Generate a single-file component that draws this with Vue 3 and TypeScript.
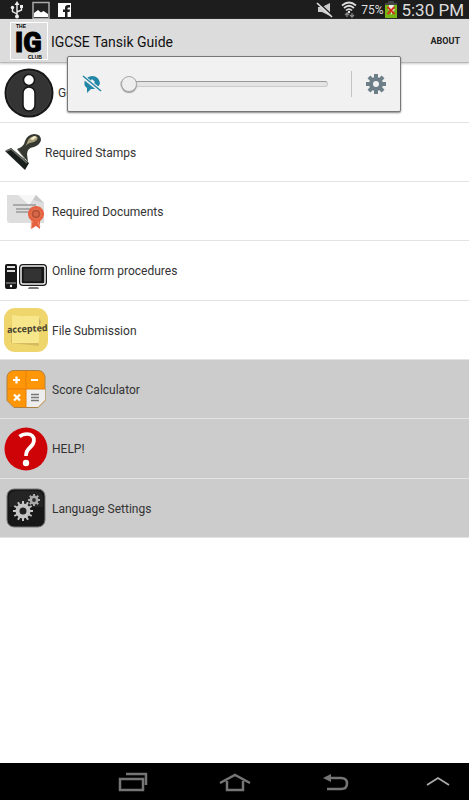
<script setup lang="ts">
import { ref } from 'vue'

type IconName = 'info' | 'stamp' | 'document' | 'computer' | 'accepted' | 'calculator' | 'help' | 'settings'

interface MenuItem {
  icon: IconName
  label: string
  shaded?: boolean
}

const items: MenuItem[] = [
  { icon: 'info', label: 'General' },
  { icon: 'stamp', label: 'Required Stamps' },
  { icon: 'document', label: 'Required Documents' },
  { icon: 'computer', label: 'Online form procedures' },
  { icon: 'accepted', label: 'File Submission' },
  { icon: 'calculator', label: 'Score Calculator', shaded: true },
  { icon: 'help', label: 'HELP!', shaded: true },
  { icon: 'settings', label: 'Language Settings', shaded: true },
]

const volume = ref(0)
const teeth = [0, 45, 90, 135, 180, 225, 270, 315]
const fineTeeth = [0, 30, 60, 90, 120, 150, 180, 210, 240, 270, 300, 330]
</script>

<template>
  <div class="screen">
    <div class="status">
      <div class="status-group notices">
        <svg width="14" height="18" viewBox="0 0 14 18" fill="none" stroke="#eee" stroke-width="1.4">
          <path d="M7 3v13M7 13L2.500 10.500V7M7 11l4.500-2V6" />
          <path d="M7 0l2.500 4h-5z" fill="#eee" stroke="none" />
          <circle cx="7" cy="15.500" r="2" fill="#eee" stroke="none" />
          <circle cx="2.500" cy="6.500" r="1.700" fill="#eee" stroke="none" />
          <path d="M10 4h3v3h-3z" fill="#eee" stroke="none" />
        </svg>
        <svg width="18" height="18" viewBox="0 0 18 18">
          <path d="M1 1.500h16v16H1z" fill="#222" stroke="#aaa" stroke-width="1.500" />
          <path d="M2 16v-4l4-3 3 2.500 2.500-1.500L16 13v3z" fill="#fff" />
        </svg>
        <svg width="13" height="14" viewBox="0 0 13 14">
          <path d="M0 0h13v14H0z" fill="#fff" />
          <path d="M7 14V9H5V6.500h2V5q0-3 3-3h2v2.500h-1.500q-1 0-1 1v1H12L11.500 9h-2v5z" fill="#1d1d1d" />
        </svg>
      </div>
      <div class="status-group readings">
        <svg width="17" height="17" viewBox="0 0 17 17">
          <path d="M2 6h4l8-4v13l-8-4H2z" fill="#ccc" />
          <path d="M2 1l15 14" stroke="#1d1d1d" stroke-width="1.500" />
          <path d="M1 2l15 14" stroke="#ddd" stroke-width="1.700" />
        </svg>
        <svg class="wifi" width="16" height="17" viewBox="0 0 16 17" fill="none">
          <path d="M1 4.500Q8-1.500 15 4.500M3 7q5-4.500 10 0M5 9.500q3-2.800 6 0" stroke="#ddd" stroke-width="1.700" />
          <circle cx="8" cy="11" r="1.200" fill="#eee" />
          <path d="M6 16v-4M4 14l2-2 2 2M11 12v4M9 14l2 2 2-2" stroke="#888" stroke-width="1.300" />
        </svg>
        <span class="percent">75%</span>
        <svg class="battery" width="12" height="17" viewBox="0 0 12 17">
          <path d="M3 0h6v2h3v4H0V2h3z" fill="#444" />
          <path d="M0 4h12v13H0z" fill="#75b514" />
          <path d="M4 4h5l-1 4h2l-4 6V9H3z" fill="#eee" />
          <path d="M2.500 6l7 7m0-7l-7 7" stroke="#d3321d" stroke-width="1.800" />
        </svg>
        <time class="clock">5:30 PM</time>
      </div>
    </div>

    <header class="appbar">
      <svg class="logo" width="38" height="38" viewBox="0 0 38 38" role="img" aria-label="The IG Club">
        <path d="M.5.500h37v37H.5z" fill="#dcdcdc" stroke="#fff" />
        <text x="6" y="6" class="logo-small">THE</text>
        <text x="5" y="30" class="logo-big">IG</text>
        <text x="18" y="37" class="logo-small">CLUB</text>
      </svg>
      <h1>IGCSE Tansik Guide</h1>
      <button class="about" type="button">ABOUT</button>
    </header>

    <main>
      <ul class="menu">
        <li v-for="item in items" :key="item.icon" :class="{ shaded: item.shaded }">
          <a href="#" class="entry" :class="item.icon">
            <svg v-if="item.icon === 'info'" width="50" height="50" viewBox="0 0 50 50">
              <circle cx="25" cy="25" r="24.500" fill="#171717" />
              <circle cx="25" cy="25" r="22" fill="#343434" stroke="#414141" />
              <circle cx="25" cy="12" r="5.500" fill="#fff" stroke="#151515" stroke-width="1.500" />
              <rect x="19" y="19" width="12" height="24" rx="6" fill="#fff" stroke="#151515" stroke-width="1.500" />
            </svg>
            <svg v-else-if="item.icon === 'stamp'" width="37" height="38" viewBox="0 0 37 38">
              <path d="M13 16q7-2 8-8 2-6 9-7 7 0 7 6-1 5-7 7-7 1-7 7l1 8z" fill="#343831" />
              <path d="M23 10q1-6 8-7 4 1 2 4-3 3-7 3-4 1-6 6z" fill="#a69d79" />
              <path d="M26 6l4-3 3 1-4 3z" fill="#f5edcb" />
              <path d="M1 18l6-3 18 15-4 7z" fill="#171e1b" />
              <path d="M2 18l5-2 16 14" fill="none" stroke="#6c7065" stroke-width="1.500" />
              <path d="M14 17l7 9" stroke="#777967" />
            </svg>
            <svg v-else-if="item.icon === 'document'" width="44" height="40" viewBox="0 0 44 40">
              <path d="M3 4h29l8 8v20H6q-3 0-3-3z" fill="#dedede" />
              <path d="M14 4h18l-7 10z" fill="#f7f7f7" />
              <path d="M32 4l8 8-11-3z" fill="#c9c9c9" />
              <path d="M9 14h23M12 18h18M12 21h16" stroke="#777" stroke-width="1.200" />
              <path d="M29 27l-2 11 5-3 4 3V28z" fill="#e56341" />
              <path d="M28 28l-1 9m6-9l3 8" stroke="#f29b7d" />
              <g transform="translate(32 23)">
                <rect v-for="a in fineTeeth" :key="a" x="-2" y="-8" width="4" height="8" rx="1" fill="#e56341" :transform="`rotate(${a})`" />
                <circle r="5" fill="#b95137" stroke="#f07a54" />
                <circle r="2.500" fill="#d4694a" />
              </g>
            </svg>
            <svg v-else-if="item.icon === 'computer'" width="44" height="28" viewBox="0 0 44 28">
              <rect x="1" y="2" width="12" height="25" rx="2" fill="#171717" />
              <path d="M3 5h8M3 9h8" stroke="#ddd" stroke-width="2" />
              <path d="M2 21h10" stroke="#aaa" />
              <circle cx="7" cy="24" r="1.200" fill="#fff" />
              <rect x="15" y="2" width="28" height="22" rx="4" fill="#191919" />
              <rect x="17" y="4" width="24" height="18" rx="2" fill="none" stroke="#eee" stroke-width="1.500" />
              <rect x="19" y="6" width="19" height="14" fill="#333" stroke="#111" />
              <path d="M25 25h9l1 2H24z" fill="#777" />
            </svg>
            <svg v-else-if="item.icon === 'accepted'" width="44" height="44" viewBox="0 0 44 44">
              <rect width="44" height="44" rx="11" fill="#efd66c" />
              <path d="M8 9l26 25 1 4-28-3z" fill="#d4bb5f" />
              <path d="M8 7l28 4-2 24H8z" fill="#f8e992" />
              <path d="M8 8h27v26H9z" fill="#f8e68a" />
              <path d="M35 10l2 4-2 4z" fill="#c4ae67" />
              <text x="3" y="24" class="stamp-text" transform="rotate(-3 22 22)">accepted</text>
            </svg>
            <svg v-else-if="item.icon === 'calculator'" width="44" height="40" viewBox="0 0 44 40">
              <path d="M10 1.500h24q3 0 5 2t2 5v23l-7 7H10l-7-7v-23q0-3 2-5t5-2z" fill="#ff9608" stroke="#ac8143" stroke-linejoin="round" />
              <path d="M22 20h19v11l-7 7H22z" fill="#ededed" />
              <path d="M22 1v38M3 20h38" stroke="#e87e0a" />
              <path d="M9 11h7M12.500 7.500v7M27 11h7M10 25.500l6 6m0-6l-6 6" stroke="#fff" stroke-width="2.200" />
              <path d="M27 25.500h8M27 28.500h8M27 31.500h8" stroke="#777" stroke-width="1.300" />
            </svg>
            <svg v-else-if="item.icon === 'help'" width="44" height="44" viewBox="0 0 44 44">
              <circle cx="22" cy="22" r="21.500" fill="#ce0308" />
              <path d="M15.500 9.500q3-2.500 7.500-2.500 6.500 0 7 6 0 4-4 7.500-4 3.500-4 8.500" fill="none" stroke="#fff" stroke-width="3.700" />
              <circle cx="22" cy="36" r="3.200" fill="#fff" />
            </svg>
            <svg v-else width="44" height="40" viewBox="0 0 44 40">
              <rect x="3" y="1" width="38" height="38" rx="7" fill="#171717" stroke="#777" />
              <path d="M5 9q1-6 7-6h20q6 0 7 6v10H5z" fill="#242424" />
              <g transform="translate(19 23)" fill="#c4c4c4">
                <rect v-for="a in fineTeeth" :key="a" x="-1" y="-10" width="2" height="4" :transform="`rotate(${a})`" />
                <circle r="5.500" fill="#222" stroke="#c4c4c4" stroke-width="4" />
              </g>
              <g transform="translate(30 12)" fill="#aaa">
                <rect v-for="a in teeth" :key="a" x="-1" y="-6" width="2" height="3" :transform="`rotate(${a})`" />
                <circle r="3.200" fill="#333" stroke="#aaa" stroke-width="2.500" />
              </g>
            </svg>
            <span class="label">{{ item.label }}</span>
          </a>
        </li>
      </ul>
    </main>

    <section class="volume" aria-label="Volume">
      <svg width="20" height="18" viewBox="0 0 20 18">
        <path d="M3 5q3-4 8-4 6 1 7 7-1 5-6 6H9l-4 4v-5q-4-3-2-8z" fill="#2286a7" />
        <path d="M10 4l3 3-2 2-3-2z" fill="#f1f1f1" />
        <path d="M0 1l19 15" stroke="#f1f1f1" stroke-width="4" />
        <path d="M1 1l18 15" stroke="#2286a7" stroke-width="1.500" />
      </svg>
      <input v-model="volume" type="range" min="0" max="15" aria-label="Volume level" />
      <button class="gear" type="button" aria-label="Sound settings">
        <svg width="20" height="20" viewBox="0 0 20 20">
          <g transform="translate(10 10)" fill="#6c7f89">
            <rect v-for="a in teeth" :key="a" x="-2" y="-10" width="4" height="5" :transform="`rotate(${a})`" />
            <circle r="5" fill="#f1f1f1" stroke="#6c7f89" stroke-width="4" />
          </g>
        </svg>
      </button>
    </section>

    <nav class="navbar" aria-label="System">
      <button type="button" aria-label="Recent apps">
        <svg width="30" height="20" viewBox="0 0 30 20" fill="none" stroke="#757575" stroke-width="2.500">
          <path d="M2 7h23v11H2zM8 2h20v11" />
        </svg>
      </button>
      <button type="button" aria-label="Home">
        <svg width="32" height="20" viewBox="0 0 32 20" fill="none" stroke="#757575" stroke-width="2.500">
          <path d="M1 11l15-8 15 8M8 9v9h16V9" />
        </svg>
      </button>
      <button type="button" aria-label="Back">
        <svg width="26" height="20" viewBox="0 0 26 20">
          <path d="M6 6h12q6 0 6 5.500T18 17H4" fill="none" stroke="#757575" stroke-width="2.500" />
          <path d="M0 6l8-4v8z" fill="#757575" />
        </svg>
      </button>
      <button type="button" aria-label="Expand">
        <svg width="24" height="20" viewBox="0 0 24 20" fill="none" stroke="#aaa" stroke-width="1.800">
          <path d="M1 13l11-7 11 7" />
        </svg>
      </button>
    </nav>
  </div>
</template>

<style>
body {
  margin: 0;
}
</style>

<style scoped>
.screen {
  position: relative;
  display: flex;
  flex-direction: column;
  min-height: 100vh;
  background: #fff;
  color: #222;
  font-family: Roboto, "Liberation Sans", sans-serif;
}

svg {
  display: block;
  flex: none;
}

button {
  padding: 0;
  border: 0;
  background: none;
  font: inherit;
  color: inherit;
}

.status {
  display: flex;
  align-items: center;
  justify-content: space-between;
  height: 19px;
  padding: 0 5px 0 10px;
  background: #1d1d1d;
}

.status-group {
  display: flex;
  align-items: center;
}

.notices {
  gap: 8px;
}

.readings {
  gap: 4px;
  color: #ddd;
}

.wifi {
  margin-left: 4px;
}

.percent {
  font-size: 12px;
}

.battery {
  margin-left: -2px;
}

.clock {
  font-size: 17px;
  line-height: 20px;
}

.appbar {
  display: flex;
  align-items: center;
  gap: 3px;
  height: 44px;
  box-sizing: border-box;
  padding: 1px 9px 0 10px;
  background: #dcdcdc;
  border-bottom: 1px solid #b8b8b8;
  box-shadow: 0 1px 2px #ccc;
}

.logo-small {
  font: bold 5px "Liberation Sans", sans-serif;
}

.logo-big {
  font: 900 27px Roboto, sans-serif;
  stroke: #000;
  stroke-width: 1;
}

h1 {
  flex: 1;
  margin: 0;
  padding-top: 2px;
  font-size: 14px;
  font-weight: 400;
  color: #111;
}

.about {
  font-size: 9px;
  font-weight: 700;
}

main {
  flex: 1;
}

.menu {
  margin: 0;
  padding: 0;
  list-style: none;
}

li {
  display: flex;
  height: 59px;
  box-sizing: border-box;
  border-bottom: 1px solid #e3e3e3;
}

li:nth-child(3n + 1) {
  height: 60px;
}

.shaded {
  background: #ccc;
}

.entry {
  display: flex;
  flex: 1;
  align-items: center;
  gap: 4px;
  padding-left: 4px;
  font-size: 12px;
  line-height: 16px;
  color: #333;
  text-decoration: none;
}

.label {
  padding-top: 1px;
}

.computer svg {
  margin-top: 10px;
}

.stamp-text {
  font: bold 9px "Open Sans", sans-serif;
  fill: #45402f;
}

.volume {
  position: absolute;
  top: 56px;
  left: calc(50% - 168px);
  display: flex;
  align-items: center;
  width: 334px;
  height: 56px;
  box-sizing: border-box;
  padding: 0 14px;
  border: 1px solid #777;
  border-radius: 2px;
  background: #f1f1f1;
  box-shadow: 0 1px 2px #888;
}

input {
  flex: 1;
  min-width: 0;
  height: 20px;
  margin: 0 23px 0 18px;
  background: none;
  appearance: none;
}

input::-webkit-slider-runnable-track {
  height: 6px;
  box-sizing: border-box;
  border: 1px solid #ccc;
  border-top-color: #999;
  border-radius: 3px;
  background: #e4e4e4;
}

input::-webkit-slider-thumb {
  width: 16px;
  height: 16px;
  margin-top: -6px;
  box-sizing: border-box;
  border: 1px solid #aaa;
  border-radius: 50%;
  background: #eee;
  box-shadow: 0 1px 1px #999;
  appearance: none;
}

.gear {
  padding: 3px 0 3px 14px;
  border-left: 1px solid #c4c4c4;
}

.navbar {
  display: flex;
  align-items: center;
  justify-content: space-between;
  height: 37px;
  box-sizing: border-box;
  padding: 0 15px 0 25%;
  background: #000;
}

.navbar button {
  display: grid;
  place-items: center;
  width: 32px;
}
</style>
